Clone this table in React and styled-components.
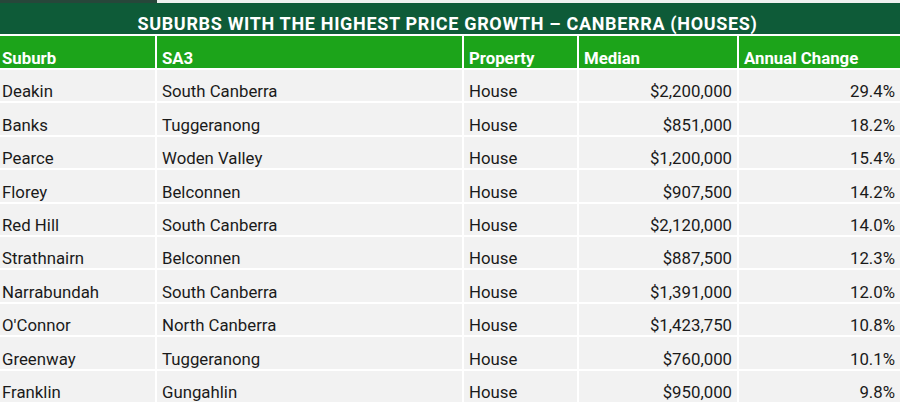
import React from 'react';
import styled, { createGlobalStyle } from 'styled-components';

const GlobalStyle = createGlobalStyle`
  html, body {
    margin: 0;
    padding: 0;
    background: #ffffff;
  }
  body {
    font-family: Roboto, "Liberation Sans", Arial, sans-serif;
    overflow: hidden;
  }
`;

const COLUMNS = '155px 305px 113px 158px 1fr';

const rows = [
  ['Deakin', 'South Canberra', 'House', '$2,200,000', '29.4%'],
  ['Banks', 'Tuggeranong', 'House', '$851,000', '18.2%'],
  ['Pearce', 'Woden Valley', 'House', '$1,200,000', '15.4%'],
  ['Florey', 'Belconnen', 'House', '$907,500', '14.2%'],
  ['Red Hill', 'South Canberra', 'House', '$2,120,000', '14.0%'],
  ['Strathnairn', 'Belconnen', 'House', '$887,500', '12.3%'],
  ['Narrabundah', 'South Canberra', 'House', '$1,391,000', '12.0%'],
  ["O'Connor", 'North Canberra', 'House', '$1,423,750', '10.8%'],
  ['Greenway', 'Tuggeranong', 'House', '$760,000', '10.1%'],
  ['Franklin', 'Gungahlin', 'House', '$950,000', '9.8%'],
];

const headings = ['Suburb', 'SA3', 'Property', 'Median', 'Annual Change'];
// median + annual change are right aligned
const rightAligned = [false, false, false, true, true];

const Page = styled.div`
  width: 900px;
  height: 406px;
  overflow: hidden;
  background: #ffffff;
`;

// leftover edge of the table above, cropped in the screenshot
const TopEdge = styled.div`
  display: grid;
  grid-template-columns: 157px 1fr;
  height: 3px;
`;

const EdgePiece = styled.div`
  background: ${props => props.dark ? '#27473a' : '#eef1ef'};
`;

// text sits at the bottom of each cell, like a spreadsheet export
const TitleBar = styled.div`
  height: 31px;
  box-sizing: border-box;
  background: #0e5b38;
  display: flex;
  align-items: flex-end;
  justify-content: center;
  padding-right: 5px;
  color: #ffffff;
  font-weight: 700;
  font-size: 18px;
  letter-spacing: 0.67px;
  white-space: nowrap;
`;

const Grid = styled.div`
  display: grid;
  grid-template-columns: ${COLUMNS};
  column-gap: 2px;
  row-gap: 2px;
  padding-top: 2px;
  background: #ffffff;
`;

const HeadCell = styled.div`
  height: 32px;
  box-sizing: border-box;
  background: #1ca41a;
  color: #ffffff;
  font-weight: 700;
  font-size: 16.8px;
  display: flex;
  align-items: flex-end;
  padding: 0 4px 0.5px 5px;
  white-space: nowrap;
  &:first-child {
    padding-left: 2px;
  }
`;

const Cell = styled.div`
  height: 31.4px;
  box-sizing: border-box;
  background: #f2f2f2;
  color: #1a1a1a;
  font-size: 16.8px;
  display: flex;
  align-items: flex-end;
  justify-content: ${props => props.right ? 'flex-end' : 'flex-start'};
  padding: 0 5px 0 5px;
  padding-left: ${props => props.first ? '2px' : '5px'};
  white-space: nowrap;
`;

export default function App() {
  return (
    <Page>
      <GlobalStyle />
      <TopEdge>
        <EdgePiece dark />
        <EdgePiece />
      </TopEdge>
      <TitleBar>SUBURBS WITH THE HIGHEST PRICE GROWTH – CANBERRA (HOUSES)</TitleBar>
      <Grid>
        {headings.map((h) => (
          <HeadCell key={h}>{h}</HeadCell>
        ))}
        {rows.map((row) =>
          row.map((value, i) => (
            <Cell key={row[0] + '-' + i} right={rightAligned[i]} first={i === 0}>
              {value}
            </Cell>
          ))
        )}
      </Grid>
    </Page>
  );
}
